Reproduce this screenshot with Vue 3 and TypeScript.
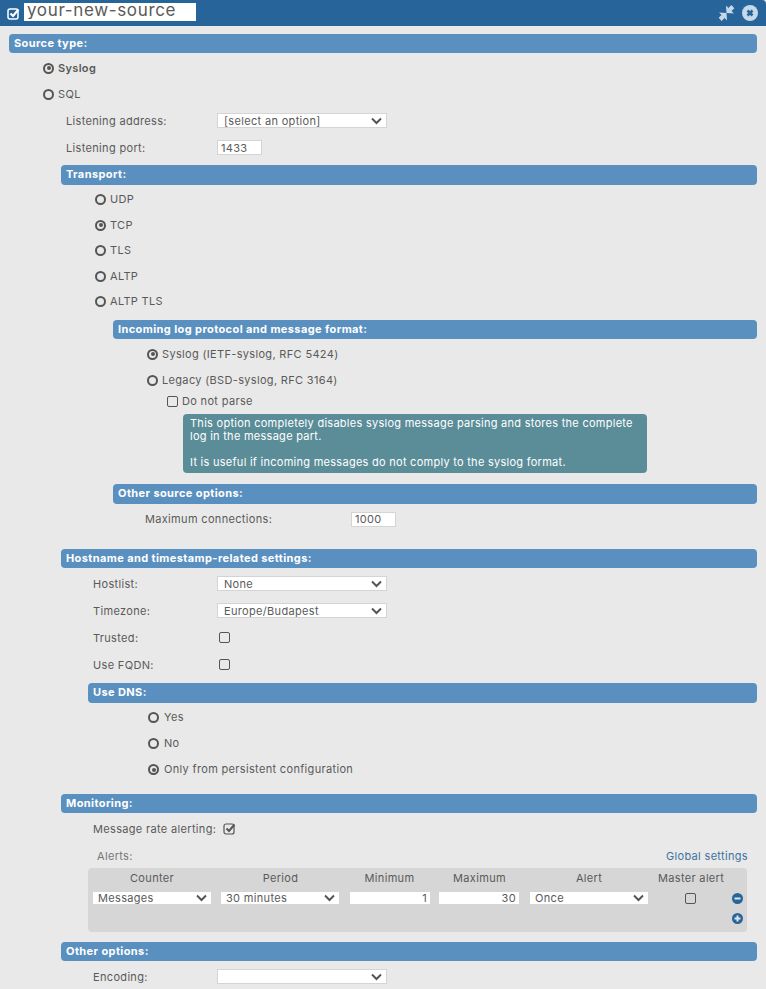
<script setup lang="ts">
const transports = [
  { label: 'UDP', on: false },
  { label: 'TCP', on: true },
  { label: 'TLS', on: false },
  { label: 'ALTP', on: false },
  { label: 'ALTP TLS', on: false }
]
const dns = [
  { label: 'Yes', on: false },
  { label: 'No', on: false },
  { label: 'Only from persistent configuration', on: true }
]
const chevron = 'M1 1.5 5.5 6 10 1.5'
</script>

<template>
  <div class="page">
    <header class="top">
      <svg class="top-check" width="13" height="13" viewBox="0 0 13 13">
        <rect x="1" y="2" width="10" height="10" rx="2" fill="none" stroke="#fff" stroke-width="1.5" />
        <path d="M3.5 6.5 6 9 11.5 2.5" fill="none" stroke="#fff" stroke-width="2.2" />
      </svg>
      <input class="title" value="your-new-source" />
      <span class="spacer"></span>
      <svg class="compress" width="17" height="18" viewBox="0 0 16 16" fill="#c5d9ea">
        <polygon points="1,7.5 8,8 8.5,15" />
        <polygon points="7.5,1 8,8 15,8.5" />
        <path d="M5 11 2 14M11 5 14 2" stroke="#c5d9ea" stroke-width="4" />
      </svg>
      <svg class="close" width="16" height="16" viewBox="0 0 16 16">
        <circle cx="8" cy="8" r="8" fill="#c5d9ea" />
        <path d="M5.5 5.5 10.5 10.5M10.5 5.5 5.5 10.5" stroke="#266499" stroke-width="2.6" />
      </svg>
    </header>

    <main class="content">
      <h3 class="bar">Source type:</h3>
      <div class="radio-row in-34 strong"><span class="radio on"></span>Syslog</div>
      <div class="radio-row in-34"><span class="radio"></span>SQL</div>
      <div class="field in-57 label-151">
        <label>Listening address:</label>
        <span class="select w170"><select><option>[select an option]</option></select>
          <svg width="11" height="8" viewBox="0 0 11 8"><path :d="chevron" /></svg></span>
      </div>
      <div class="field in-57 label-151">
        <label>Listening port:</label>
        <input class="num w45" value="1433" />
      </div>

      <section class="sub l52 s-transport">
        <h3 class="bar">Transport:</h3>
        <div v-for="t in transports" :key="t.label" class="radio-row in-34 tall">
          <span class="radio" :class="{ on: t.on }"></span>{{ t.label }}
        </div>

        <section class="sub l52 s-incoming">
          <h3 class="bar">Incoming log protocol and message format:</h3>
          <div class="radio-row in-34"><span class="radio on"></span>Syslog (IETF-syslog, RFC 5424)</div>
          <div class="radio-row in-34"><span class="radio"></span>Legacy (BSD-syslog, RFC 3164)</div>
          <div class="check-row"><span class="check"></span>Do not parse</div>
          <div class="hint">
            This option completely disables syslog message parsing and stores the complete log in the message part.<br /><br />
            It is useful if incoming messages do not comply to the syslog format.
          </div>
        </section>

        <section class="sub l52 s-other">
          <h3 class="bar">Other source options:</h3>
          <div class="field in-32 label-206">
            <label>Maximum connections:</label>
            <input class="num w45" value="1000" />
          </div>
        </section>
      </section>

      <section class="sub l52 s-host">
        <h3 class="bar">Hostname and timestamp-related settings:</h3>
        <div class="field in-32 label-124">
          <label>Hostlist:</label>
          <span class="select w170"><select><option>None</option></select>
            <svg width="11" height="8" viewBox="0 0 11 8"><path :d="chevron" /></svg></span>
        </div>
        <div class="field in-32 label-124">
          <label>Timezone:</label>
          <span class="select w170"><select><option>Europe/Budapest</option></select>
            <svg width="11" height="8" viewBox="0 0 11 8"><path :d="chevron" /></svg></span>
        </div>
        <div class="field in-32 label-124">
          <label>Trusted:</label>
          <span class="check box-in"></span>
        </div>
        <div class="field in-32 label-124">
          <label>Use FQDN:</label>
          <span class="check box-in"></span>
        </div>

        <section class="sub l27 s-dns">
          <h3 class="bar">Use DNS:</h3>
          <div v-for="d in dns" :key="d.label" class="radio-row in-60 wide-gap">
            <span class="radio" :class="{ on: d.on }"></span>{{ d.label }}
          </div>
        </section>
      </section>

      <section class="sub l52 s-mon">
        <h3 class="bar">Monitoring:</h3>
        <div class="field in-32 alert-row">
          <label>Message rate alerting:</label>
          <svg class="checked" width="13" height="13" viewBox="0 0 13 13">
            <rect x="1" y="2" width="10" height="10" rx="2" fill="none" stroke="#555" stroke-width="1.2" />
            <path d="M3.5 6.5 6 9 11.5 2.5" fill="none" stroke="#555" stroke-width="2" />
          </svg>
        </div>
        <div class="alerts-head">
          <span class="alerts-title">Alerts:</span>
          <a class="global">Global settings</a>
        </div>
        <div class="alerts">
          <div class="th">Counter</div>
          <div class="th">Period</div>
          <div class="th">Minimum</div>
          <div class="th">Maximum</div>
          <div class="th">Alert</div>
          <div class="th">Master alert</div>
          <div></div>

          <span class="select plain"><select><option>Messages</option></select>
            <svg width="11" height="8" viewBox="0 0 11 8"><path :d="chevron" /></svg></span>
          <span class="select plain"><select><option>30 minutes</option></select>
            <svg width="11" height="8" viewBox="0 0 11 8"><path :d="chevron" /></svg></span>
          <input class="cell-num" value="1" />
          <input class="cell-num" value="30" />
          <span class="select plain"><select><option>Once</option></select>
            <svg width="11" height="8" viewBox="0 0 11 8"><path :d="chevron" /></svg></span>
          <div class="center"><span class="check"></span></div>
          <svg class="round" width="11" height="11" viewBox="0 0 11 11">
            <circle cx="5.5" cy="5.5" r="5.5" fill="#266499" />
            <path d="M2.5 5.5H8.5" stroke="#e0e6ec" stroke-width="2" />
          </svg>
          <div class="add">
            <svg class="round" width="11" height="11" viewBox="0 0 11 11">
              <circle cx="5.5" cy="5.5" r="5.5" fill="#266499" />
              <path d="M2.5 5.5H8.5M5.5 2.5V8.5" stroke="#e0e6ec" stroke-width="2" />
            </svg>
          </div>
        </div>
      </section>

      <section class="sub l52 s-opts">
        <h3 class="bar">Other options:</h3>
        <div class="field in-32 label-124">
          <label>Encoding:</label>
          <span class="select w170"><select><option></option></select>
            <svg width="11" height="8" viewBox="0 0 11 8"><path :d="chevron" /></svg></span>
        </div>
      </section>
    </main>
  </div>
</template>

<style scoped>
.page {
  width: 766px;
  height: 989px;
  overflow: hidden;
  background: #e9e9e9;
  color: #5a5a5a;
  font: 11px/13px Inter, "Open Sans", sans-serif;
  letter-spacing: 0.33px;
}
.top {
  height: 26px;
  display: flex;
  align-items: center;
  box-sizing: border-box;
  padding: 0 8px 0 7px;
  background: #266499;
  border-top-right-radius: 4px;
}
.top-check { margin-right: 4px; }
.title {
  width: 172px;
  height: 18px;
  margin-top: -3px;
  box-sizing: border-box;
  padding: 0 3px 3px;
  border: 0;
  background: #fff;
  color: #5a5a5a;
  font: 17px/18px Inter, sans-serif;
  letter-spacing: 0.65px;
}
.spacer { flex: 1; }
.compress { margin-right: 7px; margin-top: -1px; }
.close { margin-top: -1px; }
.content { padding: 8px 9px 0; }
.bar {
  height: 19.4px;
  margin: 0;
  padding: 0 5px;
  background: #5a90c0;
  border-radius: 4px;
  color: #fff;
  font: 700 11px/18px Inter, sans-serif;
  letter-spacing: 0.4px;
}
.sub { margin-right: 0; }
.l52 { margin-left: 52px; }
.l27 { margin-left: 27px; }
.s-transport { margin-top: 4px; }
.s-incoming { margin-top: 5px; }
.s-other { margin-top: 11px; }
.s-host { margin-top: 16.4px; }
.s-dns { margin-top: 5px; }
.s-mon { margin-top: 11px; }
.s-opts { margin-top: 10px; }
.radio-row {
  height: 26px;
  display: flex;
  align-items: center;
}
.bar + .radio-row { margin-top: 2px; }
.tall { height: 25.6px; }
.strong { font-weight: 600; }
.in-34 { padding-left: 34px; }
.in-60 { padding-left: 60px; }
.in-57 { padding-left: 57px; }
.in-32 { padding-left: 32px; }
.radio {
  box-sizing: border-box;
  width: 11px;
  height: 11px;
  margin-right: 4px;
  border: 2px solid #555;
  border-radius: 50%;
  background: #e9e9e9;
  position: relative;
  flex: none;
}
.wide-gap .radio { margin-right: 5px; }
.radio.on::after {
  content: "";
  position: absolute;
  left: 1.5px;
  top: 1.5px;
  width: 4px;
  height: 4px;
  border-radius: 50%;
  background: #555;
}
.field {
  height: 27px;
  display: flex;
  align-items: center;
}
.bar + .field { margin-top: 2px; }
.field label { flex: none; padding-top: 1px; }
.label-151 label { width: 151px; }
.label-124 label { width: 124px; }
.label-206 label { width: 206px; }
.select {
  position: relative;
  display: inline-block;
  height: 15px;
}
.w170 { width: 170px; }
.select select {
  width: 100%;
  height: 100%;
  box-sizing: border-box;
  appearance: none;
  padding: 0 6px;
  border: 1px solid #d4d4d4;
  background: #fff;
  color: #5a5a5a;
  font: 11px Inter, sans-serif;
  letter-spacing: 0.33px;
  border-radius: 0;
  outline: none;
}
.select svg {
  position: absolute;
  right: 5px;
  top: 4px;
  fill: none;
  stroke: #555;
  stroke-width: 2;
  pointer-events: none;
}
.num {
  box-sizing: border-box;
  height: 15px;
  padding: 0 3px;
  border: 1px solid #d4d4d4;
  background: #fff;
  color: #5a5a5a;
  font: 11px Inter, sans-serif;
  letter-spacing: 0.33px;
  border-radius: 0;
  outline: none;
}
.w45 { width: 45px; }
.check {
  display: inline-block;
  box-sizing: border-box;
  width: 11px;
  height: 11px;
  border: 1px solid #555;
  border-radius: 2px;
  flex: none;
}
.box-in { margin-left: 2px; }
.check-row {
  height: 16px;
  margin-left: 54px;
  display: flex;
  align-items: center;
  gap: 4px;
}
.hint {
  width: 464px;
  height: 59px;
  box-sizing: border-box;
  margin: 5px 0 0 70px;
  padding: 3px 7px;
  border-radius: 4px;
  background: #5b8d99;
  color: #fff;
  letter-spacing: 0.27px;
}
.alert-row { gap: 7px; }
.alerts-head {
  display: flex;
  justify-content: space-between;
  height: 13px;
  margin: 8px 9px 0 36px;
}
.alerts-title { color: #777; }
.global { color: #3f72a0; }
.alerts {
  margin: 5px 10px 0 27px;
  height: 64px;
  box-sizing: border-box;
  padding: 3px 5px 0;
  border-radius: 4px;
  background: #d6d6d6;
  display: grid;
  grid-template-columns: 118px 119px 79px 81px 118px 64px 11px;
  grid-template-rows: 15px 12px;
  grid-auto-rows: auto;
  align-content: start;
  row-gap: 6px;
  column-gap: 10px;
  align-items: center;
}
.th { text-align: center; white-space: nowrap; }
.plain { height: 12px; width: 118px; display: block; }
.plain select { border: 0; padding: 0 5px; height: 12px; line-height: 12px; display: block; }
.plain svg { top: 2px; right: 4px; }
.cell-num {
  box-sizing: border-box;
  width: 80px;
  height: 12px;
  padding: 0 3px;
  border: 0;
  background: #fff;
  color: #5a5a5a;
  text-align: right;
  font: 11px Inter, sans-serif;
  letter-spacing: 0.33px;
  border-radius: 0;
  outline: none;
}
.center { display: flex; justify-content: center; }
.round { display: block; }
.add {
  grid-column: 7;
  grid-row: 3;
  margin-top: 3px;
}
</style>
